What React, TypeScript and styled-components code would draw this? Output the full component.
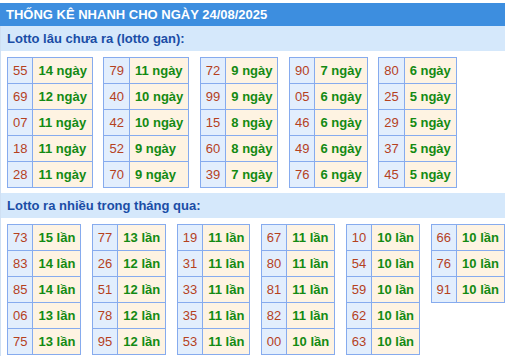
import React from 'react';
import styled, { createGlobalStyle } from 'styled-components';

const headerBlue = '#3d8edf';
const sectionBg = '#d5e8fb';
const sectionText = '#1a4da6';
const tableBorder = '#86abee';
const numBg = '#e2eefd';
const numColor = '#b5411e';
const valBg = '#fef3e2';
const valColor = '#138a13';

const GlobalStyle = createGlobalStyle`
  body {
    margin: 0;
    background: #fff;
    font-family: "Liberation Sans", Arial, sans-serif;
  }
`;

const Page = styled.div`
  padding-top: 3px;
  width: 505px;
  overflow: hidden;
`;

const Header = styled.div`
  background: ${headerBlue};
  color: #fff;
  font-size: 13px;
  font-weight: bold;
  height: 23px;
  line-height: 23px;
  padding-left: 6px;
  white-space: nowrap;
`;

const Content = styled.div`
  border-left: 1px solid #cfe0f3;
`;

const SectionTitle = styled.div`
  background: ${sectionBg};
  color: ${sectionText};
  font-size: 13px;
  font-weight: bold;
  height: 25px;
  line-height: 25px;
  padding-left: 6px;
`;

const TableRow = styled.div`
  display: flex;
  align-items: flex-start;
  gap: 10.5px;
  padding: 6px 0 5px 6px;
`;

const Table = styled.table`
  flex: none;
  border-collapse: collapse;
  border: 1px solid ${tableBorder};
  font-size: 13px;
  line-height: 15px;
`;

const Cell = styled.td<{ kind: 'num' | 'val' }>`
  border: 1px solid ${tableBorder};
  padding: 5px;
  white-space: nowrap;
  background: ${(p) => (p.kind === 'num' ? numBg : valBg)};
  color: ${(p) => (p.kind === 'num' ? numColor : valColor)};
  font-weight: ${(p) => (p.kind === 'num' ? 'normal' : 'bold')};
  text-align: ${(p) => (p.kind === 'num' ? 'center' : 'left')};
`;

type Pair = [string, number];

const ganTables: Pair[][] = [
  [['55', 14], ['69', 12], ['07', 11], ['18', 11], ['28', 11]],
  [['79', 11], ['40', 10], ['42', 10], ['52', 9], ['70', 9]],
  [['72', 9], ['99', 9], ['15', 8], ['60', 8], ['39', 7]],
  [['90', 7], ['05', 6], ['46', 6], ['49', 6], ['76', 6]],
  [['80', 6], ['25', 5], ['29', 5], ['37', 5], ['45', 5]],
];

const nhieuTables: Pair[][] = [
  [['73', 15], ['83', 14], ['85', 14], ['06', 13], ['75', 13]],
  [['77', 13], ['26', 12], ['51', 12], ['78', 12], ['95', 12]],
  [['19', 11], ['31', 11], ['33', 11], ['35', 11], ['53', 11]],
  [['67', 11], ['80', 11], ['81', 11], ['82', 11], ['00', 10]],
  [['10', 10], ['54', 10], ['59', 10], ['62', 10], ['63', 10]],
  [['66', 10], ['76', 10], ['91', 10]],
];

const StatTable = ({ rows, unit }: { rows: Pair[]; unit: string }) => (
  <Table>
    <tbody>
      {rows.map(([num, count]) => (
        <tr key={num}>
          <Cell kind="num">{num}</Cell>
          <Cell kind="val">
            {count} {unit}
          </Cell>
        </tr>
      ))}
    </tbody>
  </Table>
);

const App = () => (
  <>
    <GlobalStyle />
    <Page>
      <Header>THỐNG KÊ NHANH CHO NGÀY 24/08/2025</Header>
      <Content>
        <SectionTitle>Lotto lâu chưa ra (lotto gan):</SectionTitle>
        <TableRow>
          {ganTables.map((rows, i) => (
            <StatTable key={i} rows={rows} unit="ngày" />
          ))}
        </TableRow>
        <SectionTitle>Lotto ra nhiều trong tháng qua:</SectionTitle>
        <TableRow>
          {nhieuTables.map((rows, i) => (
            <StatTable key={i} rows={rows} unit="lần" />
          ))}
        </TableRow>
      </Content>
    </Page>
  </>
);

export default App;
